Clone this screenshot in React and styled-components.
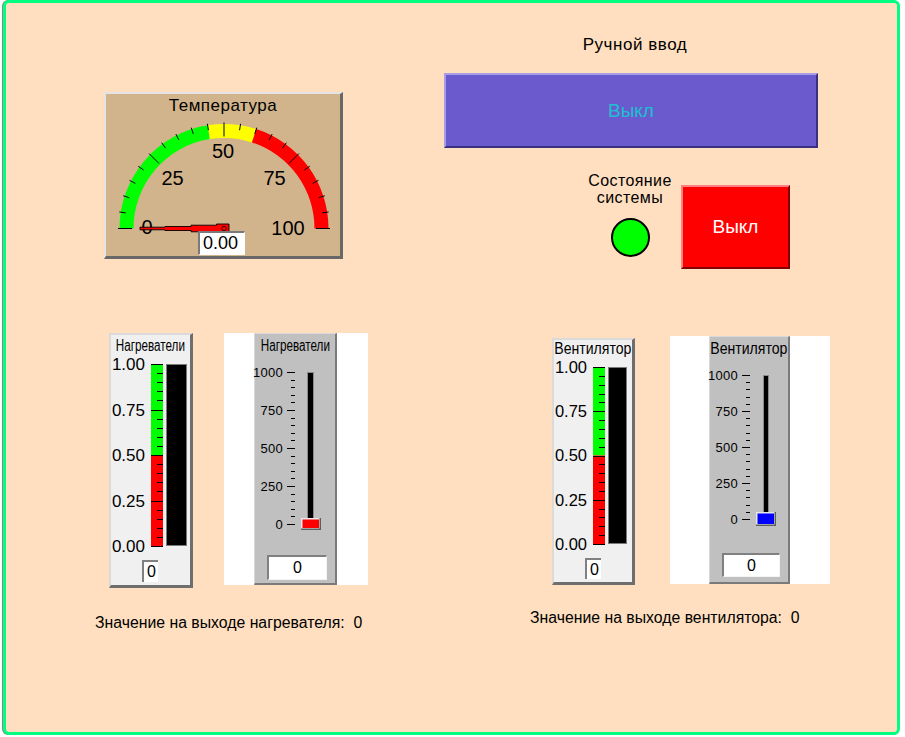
import React from 'react';
import styled, { createGlobalStyle } from 'styled-components';

const FONT = `"Liberation Sans", Arial, sans-serif`;

const Global = createGlobalStyle`
  html, body { margin: 0; padding: 0; background: #ffffff; }
  body { font-family: ${FONT}; }
`;

const Panel = styled.div`
  box-sizing: border-box;
  width: 897px;
  height: 735px;
  margin-left: 3px;
  border: 3px solid #00ff80;
  border-radius: 6px;
  background: #ffdfbf;
  box-shadow: -1px 0 0 #8a8a8a;
  display: flex;
  flex-direction: column;
  font-family: ${FONT};
  color: #000;
`;

const TopRow = styled.div`
  display: flex;
  align-items: flex-start;
  height: 330px;
  flex-shrink: 0;
`;

/* ---------- gauge ---------- */
const GaugeBox = styled.div`
  box-sizing: border-box;
  width: 239px;
  height: 167px;
  margin: 89px 0 0 98px;
  background: #d2b48c;
  border-style: solid;
  border-width: 2px 3px 3px 2px;
  border-color: #e4e4e4 #686868 #686868 #e4e4e4;
  display: flex;
  flex-direction: column;
`;

const GaugeTitle = styled.div`
  margin-top: 2px;
  height: 20px;
  font-size: 17px;
  line-height: 20px;
  letter-spacing: 0.5px;
  text-align: center;
`;

const GaugeSvg = styled.svg`
  display: block;
  overflow: visible;
`;

const ReadOut = styled.div`
  box-sizing: border-box;
  width: 47px;
  height: 24px;
  margin-left: 92px;
  background: #ffffff;
  border-style: solid;
  border-width: 2px 1px 1px 2px;
  border-color: #7a7a7a #ffffff #ffffff #7a7a7a;
  font-size: 18px;
  line-height: 21px;
  text-align: center;
  padding-right: 3px;
  position: relative;
`;

/* ---------- right column ---------- */
const RightCol = styled.div`
  display: flex;
  flex-direction: column;
  width: 374px;
  margin-left: 101px;
`;

const ManualTitle = styled.div`
  margin-top: 32px;
  padding-left: 8px;
  font-size: 17px;
  line-height: 20px;
  letter-spacing: 0.55px;
  text-align: center;
`;

const BevelButton = styled.div`
  box-sizing: border-box;
  display: flex;
  align-items: center;
  justify-content: center;
  border-style: solid;
  border-width: 2px;
  font-size: 19px;
  background: ${p => p.$bg};
  color: ${p => p.$fg};
  border-color: ${p => p.$light} ${p => p.$dark} ${p => p.$dark} ${p => p.$light};
`;

const ManualButton = styled(BevelButton)`
  margin-top: 18px;
  height: 75px;
`;

const StatusRow = styled.div`
  display: flex;
  align-items: flex-start;
  margin-top: 24px;
`;

const StatusCol = styled.div`
  width: 100px;
  margin-left: 136px;
  display: flex;
  flex-direction: column;
  align-items: center;
`;

const StatusText = styled.div`
  font-size: 16px;
  line-height: 17px;
  letter-spacing: 0.4px;
  text-align: center;
`;

const Lamp = styled.div`
  box-sizing: border-box;
  width: 39px;
  height: 39px;
  margin-top: 12px;
  border: 2px solid #000;
  border-radius: 50%;
  background: #00ff00;
`;

const StateButton = styled(BevelButton)`
  margin: 13px 0 0 1px;
  width: 109px;
  height: 84px;
`;

/* ---------- bottom ---------- */
const BottomRow = styled.div`
  display: flex;
  align-items: flex-start;
`;

const Group = styled.div`
  display: flex;
  flex-direction: column;
  flex-shrink: 0;
  width: ${p => p.$w}px;
  margin-left: ${p => p.$ml}px;
  margin-top: ${p => p.$mt}px;
`;

const Widgets = styled.div`
  display: flex;
  align-items: flex-start;
  padding-left: ${p => p.$pl}px;
  gap: ${p => p.$gap}px;
`;

const Caption = styled.div`
  margin-top: ${p => p.$mt}px;
  font-size: 15.8px;
  line-height: 18px;
  white-space: pre;
`;

const MeterBox = styled.div`
  box-sizing: border-box;
  flex-shrink: 0;
  width: ${p => p.$w}px;
  height: ${p => p.$h}px;
  margin-top: ${p => p.$mt}px;
  background: #f0f0f0;
  border-style: solid;
  border-width: 2px 3px 3px 2px;
  border-color: #dadada #6e6e6e #6e6e6e #dadada;
  display: flex;
  flex-direction: column;
`;

const WidgetTitle = styled.div`
  display: flex;
  justify-content: center;
  height: 18px;
  margin-top: ${p => p.$mt}px;
  font-size: 16px;
  line-height: 18px;
  white-space: nowrap;
`;

const Squeeze = styled.span`
  display: inline-block;
  transform: scaleX(${p => p.$k});
`;

const ScaleSvg = styled.svg`
  display: block;
  overflow: visible;
`;

const SmallValue = styled.div`
  box-sizing: border-box;
  width: 16px;
  height: ${p => p.$h}px;
  margin: 5px 0 0 31px;
  padding-left: 3px;
  background: #ffffff;
  border-style: solid;
  border-width: 2px 0 0 2px;
  border-color: #808080;
  font-size: 16px;
  line-height: ${p => p.$h - 2}px;
`;

const SliderFrame = styled.div`
  flex-shrink: 0;
  display: flex;
  width: ${p => p.$w}px;
  height: ${p => p.$h}px;
  padding-left: ${p => p.$pl}px;
  box-sizing: border-box;
  background: #ffffff;
`;

const SliderPanel = styled.div`
  box-sizing: border-box;
  width: ${p => p.$w}px;
  height: 100%;
  background: #c0c0c0;
  border-style: solid;
  border-width: 1px 2px 2px 1px;
  border-color: #d8d8d8 #7a7a7a #7a7a7a #d8d8d8;
  display: flex;
  flex-direction: column;
`;

const SliderValue = styled.div`
  box-sizing: border-box;
  width: ${p => p.$w}px;
  height: ${p => p.$h}px;
  margin: 20px 0 0 12px;
  background: #ffffff;
  border-style: solid;
  border-width: 2px 1px 1px 2px;
  border-color: #808080 #f4f4f4 #f4f4f4 #808080;
  font-size: 16px;
  line-height: ${p => p.$h - 3}px;
  text-align: center;
`;

/* ---------- drawing helpers ---------- */
const polar = (cx, cy, r, v) => {
  const a = Math.PI - (v / 100) * Math.PI;
  return [cx + r * Math.cos(a), cy - r * Math.sin(a)];
};

const band = (cx, cy, R, r, a, b) => {
  const [x1, y1] = polar(cx, cy, R, a);
  const [x2, y2] = polar(cx, cy, R, b);
  const [x3, y3] = polar(cx, cy, r, b);
  const [x4, y4] = polar(cx, cy, r, a);
  return `M${x1} ${y1} A${R} ${R} 0 0 1 ${x2} ${y2} L${x3} ${y3} A${r} ${r} 0 0 0 ${x4} ${y4} Z`;
};

function Gauge({ value }) {
  const cx = 118, cy = 112.5, R = 104.5, r = 90.5;
  const ticks = [];
  for (let v = 0; v <= 100; v += 5) {
    const major = v % 25 === 0;
    const [x1, y1] = polar(cx, cy, major ? 92 : 99.5, v);
    const [x2, y2] = polar(cx, cy, 106, v);
    ticks.push(<line key={v} x1={x1} y1={y1} x2={x2} y2={y2} stroke="#000" strokeWidth="1" />);
  }
  const labels = [
    ['0', -77, -1.5],
    ['25', -51.5, -51],
    ['50', -1, -78],
    ['75', 50.5, -51],
    ['100', 64, -0.5],
  ];
  const needle =
    'M-84 -1.3 L-59 -1.3 L-59 -2 L-33 -2 L-33 -3.3 L-7.5 -3.3 L-7.5 -4.5 L5 -4.5 L5 4.5 L-7.5 4.5 L-7.5 3.3 L-33 3.3 L-33 2 L-59 2 L-59 1.3 L-84 1.3 Z';
  return (
    <GaugeSvg width="234" height="115" viewBox="0 0 234 115">
      <path d={band(cx, cy, R, r, 0, 45)} fill="#00ff00" />
      <path d={band(cx, cy, R, r, 45, 60)} fill="#ffff00" />
      <path d={band(cx, cy, R, r, 60, 100)} fill="#ff0000" />
      {ticks}
      {labels.map(([t, dx, dy]) => (
        <text
          key={t}
          x={cx + dx}
          y={cy + dy}
          dy="0.36em"
          textAnchor="middle"
          fontFamily={FONT}
          fontSize="20"
          fill="#000"
        >
          {t}
        </text>
      ))}
      <g transform={`translate(${cx} ${cy}) rotate(${value * 1.8})`}>
        <path d={needle} fill="#ff0000" stroke="#000" strokeWidth="0.9" />
        <circle cx="0" cy="0" r="2.2" fill="none" stroke="#000" strokeWidth="0.8" />
      </g>
    </GaugeSvg>
  );
}

function BarScale({ h, top, span, labelRight, stripX, barX, barW, labelSize }) {
  const labels = ['1.00', '0.75', '0.50', '0.25', '0.00'];
  const ticks = [];
  for (let i = 0; i <= 20; i++) {
    const y = Math.round(top + (i * span) / 20) + 0.5;
    const major = i % 5 === 0;
    ticks.push(
      <line key={i} x1={major ? stripX : stripX + 6} x2={stripX + 12} y1={y} y2={y} stroke="#000" strokeWidth="1" />
    );
  }
  return (
    <ScaleSvg width="78" height={h}>
      <rect x={stripX} y={top} width="12" height={span / 2} fill="#00ff00" />
      <rect x={stripX} y={top + span / 2} width="12" height={span / 2} fill="#ff0000" />
      {ticks}
      <rect x={barX + 0.5} y={top + 0.5} width={barW - 1} height={span - 1} fill="#000" stroke="#7a7a7a" strokeWidth="1" />
      {labels.map((t, i) => (
        <text
          key={t}
          x={labelRight}
          y={top + (i * span) / 4}
          dy="0.36em"
          textAnchor="end"
          fontFamily={FONT}
          fontSize={labelSize}
          fill="#000"
        >
          {t}
        </text>
      ))}
    </ScaleSvg>
  );
}

function BarMeter({ cfg }) {
  return (
    <MeterBox $w={cfg.w} $h={cfg.h} $mt={cfg.mt}>
      <WidgetTitle $mt={cfg.titleMt}>
        <Squeeze $k={cfg.squeeze}>{cfg.title}</Squeeze>
      </WidgetTitle>
      <BarScale {...cfg.scale} />
      <SmallValue $h={cfg.valueH}>0</SmallValue>
    </MeterBox>
  );
}

function SliderScale({ h, top, span, color, trackX, trackW, thumbH }) {
  const labels = ['1000', '750', '500', '250', '0'];
  const ticks = [];
  for (let i = 0; i <= 20; i++) {
    const y = Math.round(top + (i * span) / 20) + 0.5;
    const major = i % 5 === 0;
    ticks.push(<line key={i} x1={major ? 32 : 36} x2="40" y1={y} y2={y} stroke="#000" strokeWidth="1" />);
  }
  const bottom = top + span;
  const ty = bottom - thumbH / 2;
  return (
    <ScaleSvg width="80" height={h}>
      {ticks}
      {labels.map((t, i) => (
        <text
          key={t}
          x="28"
          y={top + (i * span) / 4}
          dy="0.36em"
          textAnchor="end"
          fontFamily={FONT}
          fontSize="13"
          letterSpacing="0.3"
          fill="#000"
        >
          {t}
        </text>
      ))}
      <rect x={trackX + 0.5} y={top + 0.5} width={trackW - 1} height={span} fill="#000" stroke="#8a8a8a" strokeWidth="1" />
      <rect x="46" y={ty} width="20" height={thumbH} fill="#5e5e5e" />
      <rect x="46" y={ty} width="18.5" height={thumbH - 1.5} fill="#e8e8e8" />
      <rect x="47.5" y={ty + 1.5} width="16.5" height={thumbH - 3.5} fill={color} />
    </ScaleSvg>
  );
}

function Slider({ cfg }) {
  return (
    <SliderFrame $w={cfg.w} $h={cfg.h} $pl={cfg.pl}>
      <SliderPanel $w={cfg.pw}>
        <WidgetTitle $mt={3}>
          <Squeeze $k={cfg.squeeze}>{cfg.title}</Squeeze>
        </WidgetTitle>
        <SliderScale {...cfg.scale} />
        <SliderValue $w={cfg.vw} $h={cfg.vh}>0</SliderValue>
      </SliderPanel>
    </SliderFrame>
  );
}

const heaterMeter = {
  title: 'Нагреватели',
  squeeze: 0.73,
  w: 84,
  h: 255,
  mt: 0,
  titleMt: 2,
  valueH: 22,
  scale: { h: 200, top: 9, span: 182, labelRight: 34, stripX: 40, barX: 55, barW: 21, labelSize: 17 },
};

const fanMeter = {
  title: 'Вентилятор',
  squeeze: 0.88,
  w: 83,
  h: 247,
  mt: 2,
  titleMt: 0,
  valueH: 21,
  scale: { h: 195, top: 9, span: 177, labelRight: 33, stripX: 39, barX: 54, barW: 19, labelSize: 16.5 },
};

const heaterSlider = {
  title: 'Нагреватели',
  squeeze: 0.73,
  w: 144,
  h: 252,
  pl: 30,
  pw: 83,
  vw: 60,
  vh: 25,
  scale: { h: 180, top: 17, span: 152, color: '#ff0000', trackX: 52, trackW: 7, thumbH: 12 },
};

const fanSlider = {
  title: 'Вентилятор',
  squeeze: 0.88,
  w: 160,
  h: 248,
  pl: 39,
  pw: 81,
  vw: 58,
  vh: 24,
  scale: { h: 175, top: 17, span: 144, color: '#0000ff', trackX: 53, trackW: 6, thumbH: 14 },
};

export default function App() {
  return (
    <>
      <Global />
      <Panel>
        <TopRow>
          <GaugeBox>
            <GaugeTitle>Температура</GaugeTitle>
            <Gauge value={0} />
            <ReadOut>0.00</ReadOut>
          </GaugeBox>
          <RightCol>
            <ManualTitle>Ручной ввод</ManualTitle>
            <ManualButton $bg="#6a5acd" $fg="#1ec0d0" $light="#a69de6" $dark="#3a3080">
              Выкл
            </ManualButton>
            <StatusRow>
              <StatusCol>
                <StatusText>
                  Состояние
                  <br />
                  системы
                </StatusText>
                <Lamp />
              </StatusCol>
              <StateButton $bg="#ff0000" $fg="#ffffff" $light="#ff8080" $dark="#800000">
                Выкл
              </StateButton>
            </StatusRow>
          </RightCol>
        </TopRow>
        <BottomRow>
          <Group $w={435} $ml={89} $mt={0}>
            <Widgets $pl={14} $gap={31}>
              <BarMeter cfg={heaterMeter} />
              <Slider cfg={heaterSlider} />
            </Widgets>
            <Caption $mt={26}>{'Значение на выходе нагревателя:  0'}</Caption>
          </Group>
          <Group $w={320} $ml={0} $mt={3}>
            <Widgets $pl={22} $gap={35}>
              <BarMeter cfg={fanMeter} />
              <Slider cfg={fanSlider} />
            </Widgets>
            <Caption $mt={24}>{'Значение на выходе вентилятора:  0'}</Caption>
          </Group>
        </BottomRow>
      </Panel>
    </>
  );
}
